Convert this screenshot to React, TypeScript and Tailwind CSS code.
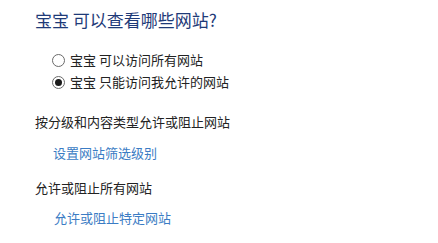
import { useState } from 'react';

const OPTIONS = [
  { id: 'all', label: '宝宝 可以访问所有网站' },
  { id: 'allowed', label: '宝宝 只能访问我允许的网站' },
];

function Radio({ checked }: { checked: boolean }) {
  return (
    <span className="flex h-[13px] w-[13px] items-center justify-center rounded-full border border-[#6a6a6a] bg-white">
      {checked && <span className="h-[7px] w-[7px] rounded-full bg-[#1a1a1a]" />}
    </span>
  );
}

export default function App() {
  const [choice, setChoice] = useState('allowed');

  return (
    <div
      className="h-[243px] w-[438px] bg-white pl-[35px] pt-[10px] text-[13px] text-[#222]"
      style={{ fontFamily: '"Noto Sans CJK SC", "Noto Sans", sans-serif' }}
    >
      <h1 className="text-[17px] leading-[20px] text-[#1e3a78]">宝宝 可以查看哪些网站?</h1>

      <div className="mt-[19px] pl-[17px]">
        {OPTIONS.map((o) => (
          <label
            key={o.id}
            onClick={() => setChoice(o.id)}
            className="flex h-[22px] cursor-default items-center gap-[5px]"
          >
            <Radio checked={choice === o.id} />
            <span className="leading-[22px]">{o.label}</span>
          </label>
        ))}
      </div>

      <p className="mt-[18px] leading-[22px]">按分级和内容类型允许或阻止网站</p>
      <a className="mt-[9px] block pl-[18px] leading-[22px] text-[#3b7cc4]">设置网站筛选级别</a>

      <p className="mt-[13px] leading-[22px]">允许或阻止所有网站</p>
      <a className="mt-[8px] block pl-[19px] leading-[22px] text-[#3b7cc4]">允许或阻止特定网站</a>
    </div>
  );
}
